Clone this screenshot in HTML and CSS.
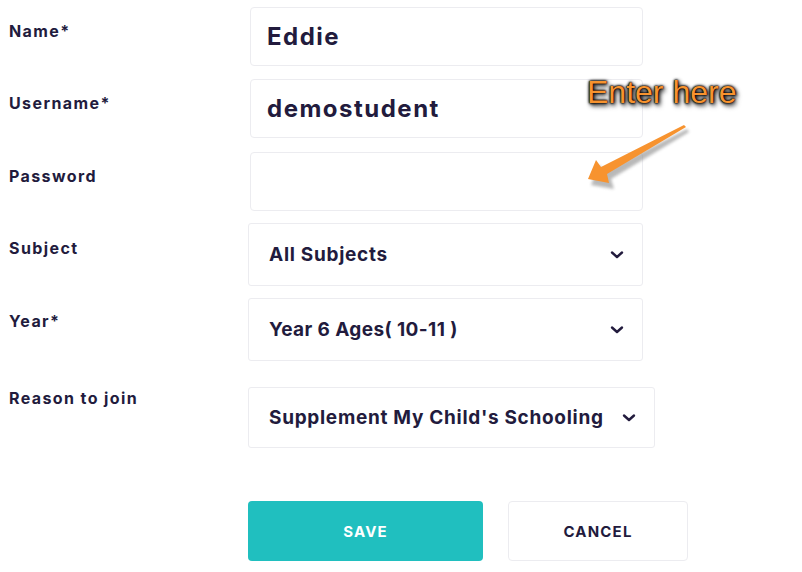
FILE: index.html
```html
<!DOCTYPE html>
<html>
<head>
<meta charset="utf-8">
<link rel="stylesheet" href="styles.css">
</head>
<body>
<div class="page">
  <form class="form">
    <div class="row row-name">
      <div class="label">Name*</div>
      <div class="input">Eddie</div>
    </div>
    <div class="row row-user">
      <div class="label">Username*</div>
      <div class="input">demostudent</div>
    </div>
    <div class="row row-pass">
      <div class="label">Password</div>
      <div class="input"></div>
    </div>
    <div class="row row-subject">
      <div class="label">Subject</div>
      <div class="select"><span>All Subjects</span><svg class="chev" viewBox="0 0 14 10"><path d="M2 2.5 L7 7 L12 2.5" /></svg></div>
    </div>
    <div class="row row-year">
      <div class="label">Year*</div>
      <div class="select"><span class="tight">Year 6 Ages( 10-11 )</span><svg class="chev" viewBox="0 0 14 10"><path d="M2 2.5 L7 7 L12 2.5" /></svg></div>
    </div>
    <div class="row row-reason">
      <div class="label">Reason to join</div>
      <div class="select select-auto"><span>Supplement My Child's Schooling</span><svg class="chev" viewBox="0 0 14 10"><path d="M2 2.5 L7 7 L12 2.5" /></svg></div>
    </div>
    <div class="actions">
      <button type="button" class="btn btn-save">SAVE</button>
      <button type="button" class="btn btn-cancel">CANCEL</button>
    </div>
  </form>

  <div class="callout">Enter here</div>
  <svg class="arrow" viewBox="0 0 802 572" width="802" height="572">
    <defs>
      <filter id="blur" x="-20%" y="-20%" width="140%" height="140%"><feGaussianBlur stdDeviation="1.6"/></filter>
    </defs>
    <polygon points="685,126 687,129 609,176 612,186 589,182 597,162 603,168" fill="#8a8a8a" opacity="0.6" filter="url(#blur)" transform="translate(2,3)"/>
    <polygon points="684,125 686,127 607,174 609,183 588,179 596,160 601,167" fill="#f7932f"/>
  </svg>
</div>
</body>
</html>
```

FILE: styles.css
```css
* { box-sizing: border-box; }
html, body { margin: 0; padding: 0; background: #ffffff; }
body {
  font-family: Inter, "Noto Sans", sans-serif;
  color: #221b3d;
  width: 802px;
  height: 572px;
  overflow: hidden;
}
.page { position: relative; width: 802px; height: 572px; }
.form { display: flex; flex-direction: column; padding-top: 7px; }
.row { display: flex; align-items: flex-start; }
.label {
  width: 248px;
  padding-left: 9px;
  font-size: 16px;
  font-weight: 700;
  letter-spacing: 1.4px;
  line-height: 20px;
}
.row-name { margin-bottom: 13px; }
.row-user { margin-bottom: 14px; }
.row-pass { margin-bottom: 12px; }
.row-subject { margin-bottom: 12px; }
.row-year { margin-bottom: 26px; }
.row-reason { margin-bottom: 53px; }
.row-name .label, .row-user .label, .row-pass .label { padding-top: 14px; }
.row-subject .label { padding-top: 15px; }
.row-year .label { padding-top: 13px; }
.row-reason .label { padding-top: 1px; }

.input {
  margin-left: 2px;
  width: 393px;
  height: 59px;
  border: 1px solid #ececf0;
  border-radius: 4px;
  padding: 0 16px;
  display: flex;
  align-items: center;
  font-size: 24px;
  font-weight: 700;
  letter-spacing: 1.5px;
}
.select {
  width: 395px;
  height: 63px;
  border: 1px solid #ececf0;
  border-radius: 3px;
  padding: 0 18px 0 20px;
  display: flex;
  align-items: center;
  justify-content: space-between;
  font-size: 19px;
  font-weight: 700;
  letter-spacing: 0.7px;
}
.select .tight { letter-spacing: 0.4px; }
.select-auto { width: 407px; height: 61px; }
.chev { width: 14px; height: 10px; }
.chev path { fill: none; stroke: #221b3d; stroke-width: 2.4; stroke-linecap: round; stroke-linejoin: round; }

.actions { display: flex; gap: 25px; padding-left: 248px; }
.btn {
  height: 60px;
  border-radius: 4px;
  font-family: Inter, "Noto Sans", sans-serif;
  font-size: 15px;
  font-weight: 700;
  letter-spacing: 1.2px;
  cursor: pointer;
}
.btn-save { width: 235px; background: #20bfbf; color: #ffffff; border: none; }
.btn-cancel { width: 180px; background: #ffffff; color: #221b3d; border: 1px solid #ececf0; }

.callout {
  position: absolute;
  left: 587px;
  top: 72px;
  font-family: "Liberation Sans", Arial, sans-serif;
  font-size: 32px;
  line-height: 40px;
  letter-spacing: 0px;
  color: #f7932f;
  text-shadow: 0 0 1px #000, 0 0 2px #000, 0 0 3px #000, 1px 1px 4px #000, 2px 3px 5px rgba(0,0,0,0.7);
}
.arrow { position: absolute; left: 0; top: 0; pointer-events: none; }
```
